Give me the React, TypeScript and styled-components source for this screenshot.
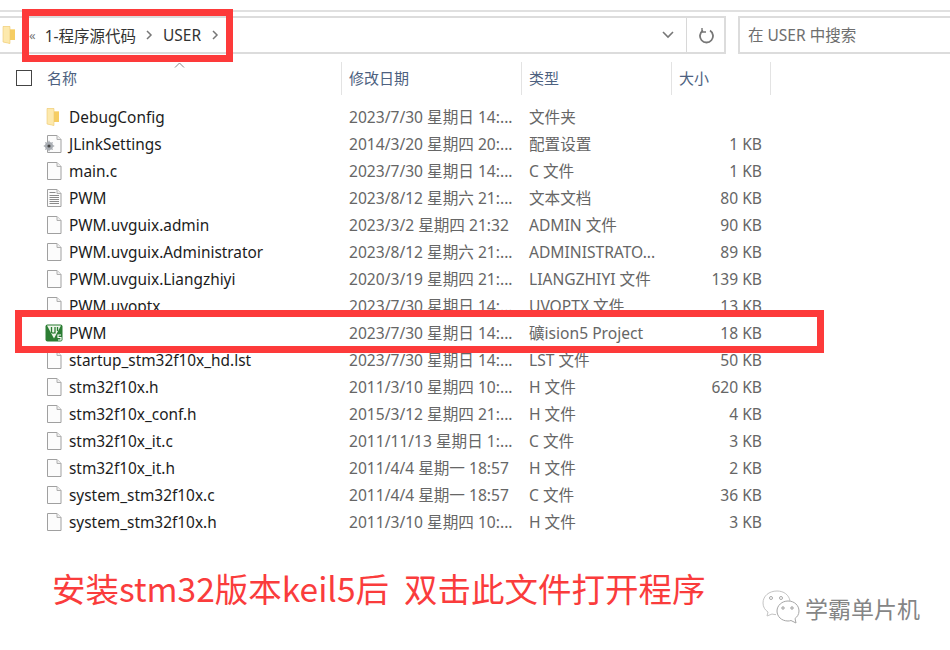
import React from 'react';
import styled, { createGlobalStyle } from 'styled-components';

const GlobalStyle = createGlobalStyle`
  html, body {
    margin: 0;
    padding: 0;
    background: #fff;
  }
  body {
    font-family: "Noto Sans", "Noto Sans CJK SC", sans-serif;
    overflow: hidden;
  }
`;

const Page = styled.div`
  position: relative;
  width: 950px;
  height: 650px;
  overflow: hidden;
  background: #fff;
  display: flex;
  flex-direction: column;
`;

const MenuStrip = styled.div`
  height: 3px;
  margin-bottom: 7px;
  padding-left: 14px;
  display: flex;
  align-items: flex-end;
  gap: 38px;
  overflow: hidden;
  font-size: 14px;
  line-height: 20px;
  color: #222;
`;

const Rule = styled.div`
  height: 2px;
  background: #e0e0e0;
  margin-bottom: 4px;
`;

const AddressRow = styled.div`
  height: 38px;
  display: flex;
  align-items: stretch;
`;

const AddressBox = styled.div`
  width: 726px;
  box-sizing: border-box;
  border: 2px solid #dcdcdc;
  border-left: none;
  display: flex;
  align-items: center;
`;

const AddressFolder = styled.div`
  width: 14px;
  height: 18px;
  margin-left: 1px;
  flex: none;
`;

const Crumbs = styled.div`
  flex: 1;
  display: flex;
  align-items: center;
  padding: 0 0 0 5px;
  font-size: 15.5px;
  color: #333;
`;

const Crumb = styled.span`
  white-space: nowrap;
`;

const Separator = styled.svg`
  width: 8px;
  height: 10px;
  margin: 0 9.5px;
  flex: none;
`;

const RootChevron = styled.span`
  font-size: 13px;
  color: #777;
  margin: 0 9px 0 9px;
  line-height: 1;
`;

const DropButton = styled.div`
  width: 37px;
  display: flex;
  align-items: center;
  justify-content: center;
`;

const RefreshButton = styled.div`
  width: 38px;
  padding-left: 3px;
  box-sizing: border-box;
  align-self: stretch;
  border-left: 1px solid #d8d8d8;
  display: flex;
  align-items: center;
  justify-content: center;
`;

const SearchBox = styled.div`
  flex: 1;
  margin-left: 12px;
  box-sizing: border-box;
  border: 2px solid #dcdcdc;
  border-right: none;
  padding: 0 0 2px 8px;
  display: flex;
  align-items: center;
  font-size: 15.5px;
  color: #6e6e6e;
`;

const Table = styled.div`
  margin-top: 8px;
  display: flex;
  flex-direction: column;
`;

const HeaderRow = styled.div`
  position: relative;
  height: 33px;
  display: grid;
  grid-template-columns: 342px 180px 150px 99px;
`;

const HeaderCell = styled.div`
  border-right: 1px solid #e3e3e3;
  padding: 0 0 2px 7px;
  display: flex;
  align-items: center;
  font-size: 15px;
  color: #4d6180;

  &:first-child {
    padding-left: 16px;
    gap: 15px;
  }
`;

const SelectBox = styled.div`
  width: 16px;
  height: 16px;
  margin-top: 1px;
  box-sizing: border-box;
  border: 1px solid #444;
`;

const SortCaret = styled.svg`
  position: absolute;
  left: 174px;
  top: 0;
  width: 11px;
  height: 6px;
`;

const FileList = styled.div`
  margin-top: 8px;
  display: flex;
  flex-direction: column;
`;

const FileRow = styled.div`
  height: 27px;
  display: grid;
  grid-template-columns: 342px 180px 150px 99px;
  align-items: center;
  font-size: 15.6px;
  white-space: nowrap;
`;

const NameCell = styled.div`
  display: flex;
  align-items: center;
  padding-left: 45px;
  font-size: 15.4px;
  color: #1c1c1c;
`;

const NameText = styled.span`
  padding-top: 2px;
`;

const IconSlot = styled.div`
  width: 24px;
  height: 18px;
  flex: none;
`;

const InfoCell = styled.div`
  padding-left: 7px;
  color: #666;
`;

const SizeCell = styled.div`
  padding-right: 9px;
  text-align: right;
  color: #666;
`;

const Footer = styled.div`
  margin-top: 30px;
  padding-left: 52px;
  display: flex;
  align-items: flex-start;
`;

const Caption = styled.div`
  font-family: "Noto Sans CJK SC", sans-serif;
  font-size: 33.5px;
  line-height: 46px;
  color: #fa3c3c;
  white-space: pre;
`;

const Watermark = styled.div`
  position: absolute;
  left: 762px;
  top: 590px;
  display: flex;
  align-items: center;
  gap: 5px;
  font-family: "Noto Sans CJK SC", sans-serif;
  font-size: 23px;
  color: #858585;
`;

const RedFrame = styled.div<{ $left: number; $top: number; $width: number; $height: number }>`
  position: absolute;
  left: ${(p) => p.$left}px;
  top: ${(p) => p.$top}px;
  width: ${(p) => p.$width}px;
  height: ${(p) => p.$height}px;
  box-sizing: border-box;
  border: 7px solid #fd3a3a;
  pointer-events: none;
`;

type Kind = 'folder' | 'config' | 'blank' | 'text' | 'keil';

const FolderIcon = () => (
  <svg width="16" height="18" viewBox="0 0 16 18">
    <path d="M2 0.500h7v3h5v10.500h-5v3.500l-7-1.500z" fill="#fbdf92" />
    <path d="M9 3.500h5v10.500h-5z" fill="#f6cd62" />
    <path d="M2 0.500h7v17l-7-1.500z" fill="#fde9ad" stroke="#efcb74" strokeWidth="0.6" />
  </svg>
);

const BlankIcon = ({ lines }: { lines?: boolean }) => (
  <svg width="18" height="18" viewBox="0 0 18 18">
    <path d="M2.500 0.500h9.500l4 4v13h-13.500z" fill="#fcfcfc" stroke="#a0a0a0" />
    <path d="M12 0.500v4h4" fill="#eee" stroke="#b0b0b0" />
    {lines && (
      <path
        d="M4.500 3.500h6M4.500 6.500h9.500M4.500 8.500h9.500M4.500 10.500h9.500M4.500 12.500h9.500M4.500 14.500h9.500"
        stroke="#8a8a8a"
        strokeWidth="1"
      />
    )}
  </svg>
);

const ShiftedSvg = styled.svg`
  margin-left: -2px;
`;

const ConfigIcon = () => (
  <ShiftedSvg width="20" height="18" viewBox="0 0 20 18">
    <path d="M4.500 0.500h9.500l4 4v13h-13.500z" fill="#fcfcfc" stroke="#a0a0a0" />
    <path d="M14 0.500v4h4" fill="#eee" stroke="#b0b0b0" />
    <circle cx="6" cy="11" r="4" fill="#a9adb3" />
    <path
      d="M6 5.800v10.400M0.800 11h10.400M2.400 7.400l7.200 7.200M9.600 7.400l-7.200 7.200"
      stroke="#a9adb3"
      strokeWidth="1.300"
    />
    <circle cx="6" cy="11" r="1.600" fill="#444" />
  </ShiftedSvg>
);

const KeilIcon = () => (
  <svg width="18" height="18" viewBox="0 0 18 18">
    <rect x="0.500" y="0.500" width="17" height="17" rx="2" fill="#2b7d33" />
    <path d="M2 1.500h14l-7 13z" fill="#eef6ea" />
    <path d="M6.500 3v6M6.500 8c0 1.500 3.500 1.500 3.500 0M10 3v6.500M12.500 3v4" stroke="#2b7d33" strokeWidth="1.300" fill="none" />
    <path d="M16 11h-3v2.500h3v2.500h-3" stroke="#fff" strokeWidth="1.100" fill="none" />
  </svg>
);

const WeChatIcon = () => (
  <svg width="38" height="36" viewBox="0 0 38 36">
    <path
      d="M15 1C7 1 1 6 1 13c0 4 2 7 5 9l-1 4 5-2c1 .4 3 .6 4 .6"
      fill="none"
      stroke="#c4c4c4"
      strokeWidth="1"
    />
    <path d="M15 1c7 0 12 4 13 10" fill="none" stroke="#c4c4c4" strokeWidth="1" />
    <path
      d="M26 11c6.500 0 11 4.500 11 10 0 3.500-2 6-4 7.500l1 4.500-5-2.500c-1 .3-2 .5-3 .5-6.500 0-11-4.500-11-10s5-10 11-10z"
      fill="#fff"
      stroke="#a6a6a6"
      strokeWidth="1"
    />
    <circle cx="9" cy="8" r="1.500" fill="none" stroke="#aaa" />
    <circle cx="19" cy="8" r="1.500" fill="none" stroke="#aaa" />
    <circle cx="21" cy="18" r="1.200" fill="none" stroke="#999" />
    <circle cx="30" cy="18" r="1.200" fill="none" stroke="#999" />
  </svg>
);

const icons: Record<Kind, React.ReactNode> = {
  folder: <FolderIcon />,
  config: <ConfigIcon />,
  blank: <BlankIcon />,
  text: <BlankIcon lines />,
  keil: <KeilIcon />,
};

const files: { name: string; date: string; type: string; size: string; kind: Kind }[] = [
  { name: 'DebugConfig', date: '2023/7/30 星期日 14:...', type: '文件夹', size: '', kind: 'folder' },
  { name: 'JLinkSettings', date: '2014/3/20 星期四 20:...', type: '配置设置', size: '1 KB', kind: 'config' },
  { name: 'main.c', date: '2023/7/30 星期日 14:...', type: 'C 文件', size: '1 KB', kind: 'blank' },
  { name: 'PWM', date: '2023/8/12 星期六 21:...', type: '文本文档', size: '80 KB', kind: 'text' },
  { name: 'PWM.uvguix.admin', date: '2023/3/2 星期四 21:32', type: 'ADMIN 文件', size: '90 KB', kind: 'blank' },
  { name: 'PWM.uvguix.Administrator', date: '2023/8/12 星期六 21:...', type: 'ADMINISTRATO...', size: '89 KB', kind: 'blank' },
  { name: 'PWM.uvguix.Liangzhiyi', date: '2020/3/19 星期四 21:...', type: 'LIANGZHIYI 文件', size: '139 KB', kind: 'blank' },
  { name: 'PWM.uvoptx', date: '2023/7/30 星期日 14:...', type: 'UVOPTX 文件', size: '13 KB', kind: 'blank' },
  { name: 'PWM', date: '2023/7/30 星期日 14:...', type: '礦ision5 Project', size: '18 KB', kind: 'keil' },
  { name: 'startup_stm32f10x_hd.lst', date: '2023/7/30 星期日 14:...', type: 'LST 文件', size: '50 KB', kind: 'blank' },
  { name: 'stm32f10x.h', date: '2011/3/10 星期四 10:...', type: 'H 文件', size: '620 KB', kind: 'blank' },
  { name: 'stm32f10x_conf.h', date: '2015/3/12 星期四 21:...', type: 'H 文件', size: '4 KB', kind: 'blank' },
  { name: 'stm32f10x_it.c', date: '2011/11/13 星期日 1:...', type: 'C 文件', size: '3 KB', kind: 'blank' },
  { name: 'stm32f10x_it.h', date: '2011/4/4 星期一 18:57', type: 'H 文件', size: '2 KB', kind: 'blank' },
  { name: 'system_stm32f10x.c', date: '2011/4/4 星期一 18:57', type: 'C 文件', size: '36 KB', kind: 'blank' },
  { name: 'system_stm32f10x.h', date: '2011/3/10 星期四 10:...', type: 'H 文件', size: '3 KB', kind: 'blank' },
];

const Chevron = () => (
  <Separator viewBox="0 0 8 10">
    <path d="M2 1l4 4-4 4" fill="none" stroke="#777" strokeWidth="1.500" />
  </Separator>
);

export default function App() {
  return (
    <Page>
      <GlobalStyle />
      <MenuStrip>
        <span>主页</span>
        <span>查看</span>
      </MenuStrip>
      <Rule />
      <AddressRow>
        <AddressBox>
          <AddressFolder>
            <FolderIcon />
          </AddressFolder>
          <Crumbs>
            <RootChevron>«</RootChevron>
            <Crumb>1-程序源代码</Crumb>
            <Chevron />
            <Crumb>USER</Crumb>
            <Chevron />
          </Crumbs>
          <DropButton>
            <svg width="12" height="8" viewBox="0 0 12 8">
              <path d="M1 1l5 5 5-5" fill="none" stroke="#777" strokeWidth="1.600" />
            </svg>
          </DropButton>
          <RefreshButton>
            <svg width="16" height="17" viewBox="0 0 16 17">
              <path d="M4 3.500a6.500 6.500 0 1 0 7 0" fill="none" stroke="#777" strokeWidth="1.800" />
              <path d="M3 1v4h4" fill="none" stroke="#777" strokeWidth="1.400" />
            </svg>
          </RefreshButton>
        </AddressBox>
        <SearchBox>在 USER 中搜索</SearchBox>
      </AddressRow>
      <Table>
        <HeaderRow>
          <HeaderCell>
            <SelectBox />
            名称
          </HeaderCell>
          <HeaderCell>修改日期</HeaderCell>
          <HeaderCell>类型</HeaderCell>
          <HeaderCell>大小</HeaderCell>
          <SortCaret viewBox="0 0 11 6">
            <path d="M1 5.500l4.500-4.500 4.500 4.500" fill="none" stroke="#888" />
          </SortCaret>
        </HeaderRow>
        <FileList>
          {files.map((f, i) => (
            <FileRow key={i}>
              <NameCell>
                <IconSlot>{icons[f.kind]}</IconSlot>
                <NameText>{f.name}</NameText>
              </NameCell>
              <InfoCell>{f.date}</InfoCell>
              <InfoCell>{f.type}</InfoCell>
              <SizeCell>{f.size}</SizeCell>
            </FileRow>
          ))}
        </FileList>
      </Table>
      <Footer>
        <Caption>安装stm32版本keil5后  双击此文件打开程序</Caption>
      </Footer>
      <Watermark>
        <WeChatIcon />
        学霸单片机
      </Watermark>
      <RedFrame $left={22} $top={9} $width={211} $height={53} />
      <RedFrame $left={15} $top={310} $width={809} $height={43} />
    </Page>
  );
}
